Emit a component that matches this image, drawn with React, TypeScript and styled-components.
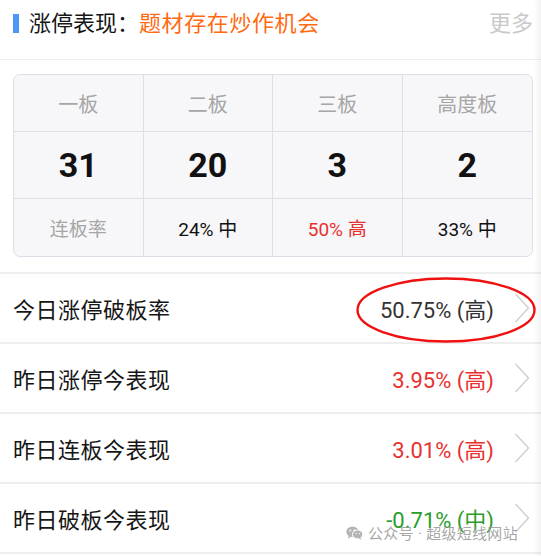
import React from "react";
import styled, { createGlobalStyle } from "styled-components";

const GlobalStyle = createGlobalStyle`
  * { box-sizing: border-box; }
  body {
    margin: 0;
    background: #ffffff;
    font-family: Roboto, "Noto Sans CJK SC", "Noto Sans", sans-serif;
  }
`;

type Level = "normal" | "up" | "down";

const stats = [
  { title: "一板", count: 31 },
  { title: "二板", count: 20 },
  { title: "三板", count: 3 },
  { title: "高度板", count: 2 },
];

const rates: { text: string; level: Level }[] = [
  { text: "24% 中", level: "normal" },
  { text: "50% 高", level: "up" },
  { text: "33% 中", level: "normal" },
];

const rows: { label: string; value: string; level: Level }[] = [
  { label: "今日涨停破板率", value: "50.75% (高)", level: "normal" },
  { label: "昨日涨停今表现", value: "3.95% (高)", level: "up" },
  { label: "昨日连板今表现", value: "3.01% (高)", level: "up" },
  { label: "昨日破板今表现", value: "-0.71% (中)", level: "down" },
];

const levelColor = (level: Level, normal: string) =>
  level === "up" ? "#e8302f" : level === "down" ? "#2a9d2a" : normal;

const Chevron = () => (
  <svg width="16" height="30" viewBox="0 0 16 30">
    <polyline points="1.5,1 14.5,15 1.5,29" fill="none" stroke="#cfcfcf" strokeWidth="1.4" />
  </svg>
);

const WeChat = () => (
  <svg width="17" height="14" viewBox="0 0 17 14">
    <ellipse cx="6.5" cy="5.8" rx="6.2" ry="5.3" fill="#b5b5b5" />
    <path d="M2.6 9.6 L2 12.6 L5.2 10.8 Z" fill="#b5b5b5" />
    <ellipse cx="11.6" cy="8.4" rx="5.2" ry="4.4" fill="#b5b5b5" stroke="#ffffff" strokeWidth="1" />
    <path d="M14.4 11.6 L15.4 13.8 L12.6 12.6 Z" fill="#b5b5b5" />
    <circle cx="4.3" cy="4.4" r="0.9" fill="#ffffff" />
    <circle cx="8.3" cy="4.4" r="0.9" fill="#ffffff" />
    <circle cx="10" cy="7.6" r="0.7" fill="#ffffff" />
    <circle cx="13.3" cy="7.6" r="0.7" fill="#ffffff" />
  </svg>
);

export default function App() {
  return (
    <Page>
      <GlobalStyle />
      <Header>
        <Marker />
        <Title>涨停表现：</Title>
        <Theme>题材存在炒作机会</Theme>
        <More>更多</More>
      </Header>

      <Table>
        {stats.map((s) => (
          <HeadCell key={s.title}>{s.title}</HeadCell>
        ))}
        {stats.map((s) => (
          <CountCell key={s.title}>{s.count}</CountCell>
        ))}
        <RateCell $level="normal" $muted>
          连板率
        </RateCell>
        {rates.map((r) => (
          <RateCell key={r.text} $level={r.level}>
            {r.text}
          </RateCell>
        ))}
      </Table>

      <List>
        {rows.map((r, i) => (
          <Row key={r.label}>
            <Label>{r.label}</Label>
            <Value $level={r.level}>{r.value}</Value>
            <Chevron />
            {i === 0 && (
              <Circle width="186" height="70" viewBox="0 0 186 70">
                <ellipse cx="92" cy="35" rx="88.5" ry="31.5" fill="none" stroke="#f01010" strokeWidth="2.4" />
              </Circle>
            )}
          </Row>
        ))}
      </List>

      <Watermark>
        <WeChat />
        <span>公众号 · 超级短线网站</span>
      </Watermark>
      <EdgeShade />
    </Page>
  );
}

const Page = styled.div`
  position: relative;
  width: 541px;
  height: 556px;
  overflow: hidden;
  background: #ffffff;
`;

const Header = styled.div`
  height: 60px;
  padding: 0 8px 12px 13px;
  display: flex;
  align-items: center;
  border-bottom: 1px solid #eeeeee;
  font-size: 22px;
  line-height: 30px;
`;

const Marker = styled.div`
  width: 6px;
  height: 19px;
  background: #4c97f8;
  margin-right: 10px;
`;

const Title = styled.span`
  color: #151515;
`;

const Theme = styled.span`
  color: #ff6a12;
  letter-spacing: 0.6px;
`;

const More = styled.span`
  margin-left: auto;
  color: #c9c9c9;
`;

const Table = styled.div`
  margin: 14px 8px 0 13px;
  display: grid;
  grid-template-columns: repeat(4, 1fr);
  grid-template-rows: 57px 67px 57px;
  background: #f7f7f9;
  border: 1px solid #dcdfe8;
  border-radius: 7px;
  overflow: hidden;
`;

const Cell = styled.div`
  display: flex;
  align-items: center;
  justify-content: center;
  border-right: 1px solid #dcdfe8;
  border-bottom: 1px solid #dcdfe8;

  &:nth-child(4n) {
    border-right: none;
  }
  &:nth-child(n + 9) {
    border-bottom: none;
  }
`;

const HeadCell = styled(Cell)`
  font-size: 20px;
  color: #a6a6a6;
`;

const CountCell = styled(Cell)`
  font-size: 34px;
  font-weight: 700;
  color: #111111;
`;

const RateCell = styled(Cell)<{ $level: Level; $muted?: boolean }>`
  font-size: 19px;
  color: ${(p) => (p.$muted ? "#a6a6a6" : levelColor(p.$level, "#111111"))};
`;

const List = styled.div`
  margin-top: 15px;
  border-top: 2px solid #eeeeee;
`;

const Row = styled.div`
  position: relative;
  height: 70px;
  padding: 0 11px 0 13px;
  display: flex;
  align-items: center;
  border-bottom: 2px solid #eeeeee;
`;

const Label = styled.span`
  font-size: 22px;
  color: #151515;
  letter-spacing: 0.5px;
`;

const Value = styled.span<{ $level: Level }>`
  margin-left: auto;
  margin-right: 20px;
  font-size: 22px;
  color: ${(p) => levelColor(p.$level, "#333333")};
`;

const Circle = styled.svg`
  position: absolute;
  left: 354px;
  top: 1px;
  pointer-events: none;
`;

const Watermark = styled.div`
  position: absolute;
  left: 346px;
  top: 522px;
  display: flex;
  align-items: center;
  gap: 5px;
  font-size: 15px;
  color: rgba(150, 150, 150, 0.85);
  letter-spacing: 0.3px;
`;

const EdgeShade = styled.div`
  position: absolute;
  top: 0;
  right: 0;
  width: 7px;
  height: 100%;
  background: linear-gradient(to right, rgba(0, 0, 0, 0), rgba(0, 0, 0, 0.05));
  pointer-events: none;
`;
